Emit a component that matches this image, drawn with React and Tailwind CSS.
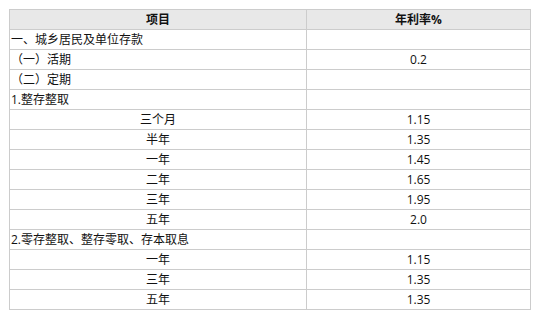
import React from "react";

const rows = [
  { l: "一、城乡居民及单位存款", r: "", left: true },
  { l: "（一）活期", r: "0.2", left: true },
  { l: "（二）定期", r: "", left: true },
  { l: "1.整存整取", r: "", left: true },
  { l: "三个月", r: "1.15" },
  { l: "半年", r: "1.35" },
  { l: "一年", r: "1.45" },
  { l: "二年", r: "1.65" },
  { l: "三年", r: "1.95" },
  { l: "五年", r: "2.0" },
  { l: "2.零存整取、整存零取、存本取息", r: "", left: true },
  { l: "一年", r: "1.15" },
  { l: "三年", r: "1.35" },
  { l: "五年", r: "1.35" },
];

export default function App() {
  return (
    <div
      className="w-[535px] h-[310px] bg-white pt-[9px] pl-[9px] text-[12px] text-[#111]"
      style={{ fontFamily: '"Open Sans", "Noto Sans CJK SC", sans-serif' }}
    >
      <table className="border-collapse w-[522px] table-fixed">
        <colgroup>
          <col className="w-[297px]" />
          <col />
        </colgroup>
        <thead>
          <tr className="h-[20px] bg-[#e8e8e8]">
            <th className="border border-[#cccccc] p-0 font-bold text-center leading-[19px]">项目</th>
            <th className="border border-[#cccccc] p-0 font-bold text-center leading-[19px]">年利率%</th>
          </tr>
        </thead>
        <tbody>
          {rows.map((row, i) => (
            <tr key={i} className="h-[20px]">
              <td
                className={
                  row.left
                    ? "border border-[#cccccc] p-0 pl-px text-left leading-[19px] whitespace-nowrap"
                    : "border border-[#cccccc] p-0 text-center leading-[19px] whitespace-nowrap"
                }
              >
                {row.l}
              </td>
              <td className="border border-[#cccccc] p-0 text-center leading-[19px]">{row.r}</td>
            </tr>
          ))}
        </tbody>
      </table>
    </div>
  );
}
